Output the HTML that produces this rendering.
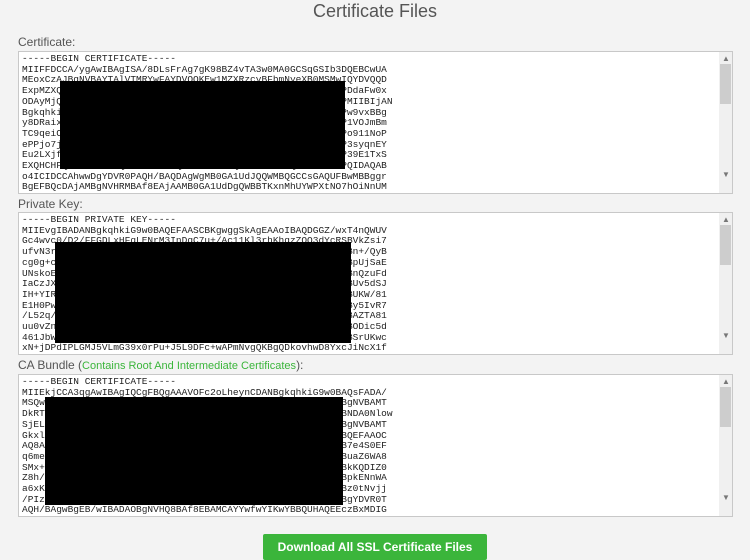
<!DOCTYPE html>
<html><head><style>
body{margin:0;background:#f3f3f3;font-family:"Liberation Sans",Arial,sans-serif;width:750px;height:558px;overflow:hidden;position:relative}
h1{position:absolute;top:0;left:0;width:750px;margin:0;text-align:center;font-weight:normal;font-size:18px;color:#555;line-height:22px}
.lbl{position:absolute;left:18px;font-size:12px;color:#555}
.lbl span{color:#3bb53b;font-size:11px}
.ta{position:absolute;left:18px;width:713px;height:141px;background:#fff;border:1px solid #c8c8c8;overflow:hidden}
.ta pre{margin:0;padding:2px 0 0 3px;font-family:"Liberation Mono",monospace;font-size:9.5px;line-height:10.7px;color:#222}
.sb{position:absolute;right:0;top:0;width:13px;height:100%;background:#f0f0f0}
.th{position:absolute;left:1px;width:11px;top:12px;height:40px;background:#cdcdcd}
.ar{position:absolute;left:3px;font-size:8px;color:#777}
.blk{position:absolute;background:#000}
.btn{position:absolute;left:263px;top:534px;width:224px;height:26px;background:#3bb53b;color:#fff;font-weight:bold;font-size:12px;text-align:center;line-height:26px;border-radius:2px}
</style></head><body>
<h1>Certificate Files</h1>
<div class="lbl" style="top:35px">Certificate:</div>
<div class="ta" style="top:51px"><pre>-----BEGIN CERTIFICATE-----
MIIFFDCCA/ygAwIBAgISA/8DLsFrAg7gK98BZ4vTA3w0MA0GCSqGSIb3DQEBCwUA
MEoxCzAJBgNVBAYTAlVTMRYwFAYDVQQKEw1MZXRzcyBFbmNyeXB0MSMwIQYDVQQD
ExpMZXQQWERTYUIOPQWERTYUIOPQWERTYUIOPQWERTYUIOPQWERTYUIOPDdaFw0x
ODAyMjQQWERTYUIOPQWERTYUIOPQWERTYUIOPQWERTYUIOPQWERTYUIOPMIIBIjAN
BgkqhkiQWERTYUIOPQWERTYUIOPQWERTYUIOPQWERTYUIOPQWERTYUIOPw9vxBBg
y8DRaixQWERTYUIOPQWERTYUIOPQWERTYUIOPQWERTYUIOPQWERTYUIOP1VOJmBm
TC9qeiCQWERTYUIOPQWERTYUIOPQWERTYUIOPQWERTYUIOPQWERTYUIOPo911NoP
ePPjo7jQWERTYUIOPQWERTYUIOPQWERTYUIOPQWERTYUIOPQWERTYUIOP3syqnEY
Eu2LXjfQWERTYUIOPQWERTYUIOPQWERTYUIOPQWERTYUIOPQWERTYUIOP39E1TxS
EXQHCHFQWERTYUIOPQWERTYUIOPQWERTYUIOPQWERTYUIOPQWERTYUIOPQIDAQAB
o4ICIDCCAhwwDgYDVR0PAQH/BAQDAgWgMB0GA1UdJQQWMBQGCCsGAQUFBwMBBggr
BgEFBQcDAjAMBgNVHRMBAf8EAjAAMB0GA1UdDgQWBBTKxnMhUYWPXtNO7hOiNnUM</pre>
<div class="sb"><span class="ar" style="top:2px">&#9650;</span><div class="th"></div><span class="ar" style="top:118px">&#9660;</span></div></div>
<div class="blk" style="left:60px;top:81px;width:285px;height:88px"></div>

<div class="lbl" style="top:197px">Private Key:</div>
<div class="ta" style="top:212px"><pre>-----BEGIN PRIVATE KEY-----
MIIEvgIBADANBgkqhkiG9w0BAQEFAASCBKgwggSkAgEAAoIBAQDGGZ/wxT4nQWUV
Gc4wvc0/D2/FFGDLxHFqLENrM3InDqC7u+/Ac11Kl3rhKhqzZOQ3dYcRSBVkZsi7
ufvN3rQWERTYUIOPQWERTYUIOPQWERTYUIOPQWERTYUIOPQWERTYUIOPABn+/QyB
cg0g+cQWERTYUIOPQWERTYUIOPQWERTYUIOPQWERTYUIOPQWERTYUIOPABpUjSaE
UNskoEQWERTYUIOPQWERTYUIOPQWERTYUIOPQWERTYUIOPQWERTYUIOPABnQzuFd
IaCzJXQWERTYUIOPQWERTYUIOPQWERTYUIOPQWERTYUIOPQWERTYUIOPABUv5dSJ
IH+YIRQWERTYUIOPQWERTYUIOPQWERTYUIOPQWERTYUIOPQWERTYUIOPABUKW/81
E1H0PwQWERTYUIOPQWERTYUIOPQWERTYUIOPQWERTYUIOPQWERTYUIOPABy5IvR7
/L52q/QWERTYUIOPQWERTYUIOPQWERTYUIOPQWERTYUIOPQWERTYUIOPABAZTA81
uu0vZnQWERTYUIOPQWERTYUIOPQWERTYUIOPQWERTYUIOPQWERTYUIOPABODic5d
461JbWQWERTYUIOPQWERTYUIOPQWERTYUIOPQWERTYUIOPQWERTYUIOPABSrUKwc
xN+jDPdIPLGMJ5VLmG39x0rPu+J5L9DFc+wAPmNvgQKBgQDkovhwD8YxcJiNcX1f</pre>
<div class="sb"><span class="ar" style="top:2px">&#9650;</span><div class="th"></div><span class="ar" style="top:118px">&#9660;</span></div></div>
<div class="blk" style="left:55px;top:242px;width:296px;height:101px"></div>

<div class="lbl" style="top:358px">CA Bundle (<span>Contains Root And Intermediate Certificates</span>):</div>
<div class="ta" style="top:374px"><pre>-----BEGIN CERTIFICATE-----
MIIEkjCCA3qgAwIBAgIQCgFBQgAAAVOFc2oLheynCDANBgkqhkiG9w0BAQsFADA/
MSQwIQWERTYUIOPQWERTYUIOPQWERTYUIOPQWERTYUIOPQWERTYUIOPABgNVBAMT
DkRTVQWERTYUIOPQWERTYUIOPQWERTYUIOPQWERTYUIOPQWERTYUIOPABNDA0Nlow
SjELMQWERTYUIOPQWERTYUIOPQWERTYUIOPQWERTYUIOPQWERTYUIOPABgNVBAMT
GkxlcQWERTYUIOPQWERTYUIOPQWERTYUIOPQWERTYUIOPQWERTYUIOPABQEFAAOC
AQ8AMQWERTYUIOPQWERTYUIOPQWERTYUIOPQWERTYUIOPQWERTYUIOPAB7e4S0EF
q6meNQWERTYUIOPQWERTYUIOPQWERTYUIOPQWERTYUIOPQWERTYUIOPABuaZ6WA8
SMx+yQWERTYUIOPQWERTYUIOPQWERTYUIOPQWERTYUIOPQWERTYUIOPABkKQDIZ0
Z8h/pQWERTYUIOPQWERTYUIOPQWERTYUIOPQWERTYUIOPQWERTYUIOPABpkENnWA
a6xK8QWERTYUIOPQWERTYUIOPQWERTYUIOPQWERTYUIOPQWERTYUIOPABz0tNvjj
/PIzaQWERTYUIOPQWERTYUIOPQWERTYUIOPQWERTYUIOPQWERTYUIOPABgYDVR0T
AQH/BAgwBgEB/wIBADAOBgNVHQ8BAf8EBAMCAYYwfwYIKwYBBQUHAQEEczBxMDIG</pre>
<div class="sb"><span class="ar" style="top:2px">&#9650;</span><div class="th"></div><span class="ar" style="top:118px">&#9660;</span></div></div>
<div class="blk" style="left:45px;top:397px;width:298px;height:108px"></div>

<div class="btn">Download All SSL Certificate Files</div>
</body></html>
